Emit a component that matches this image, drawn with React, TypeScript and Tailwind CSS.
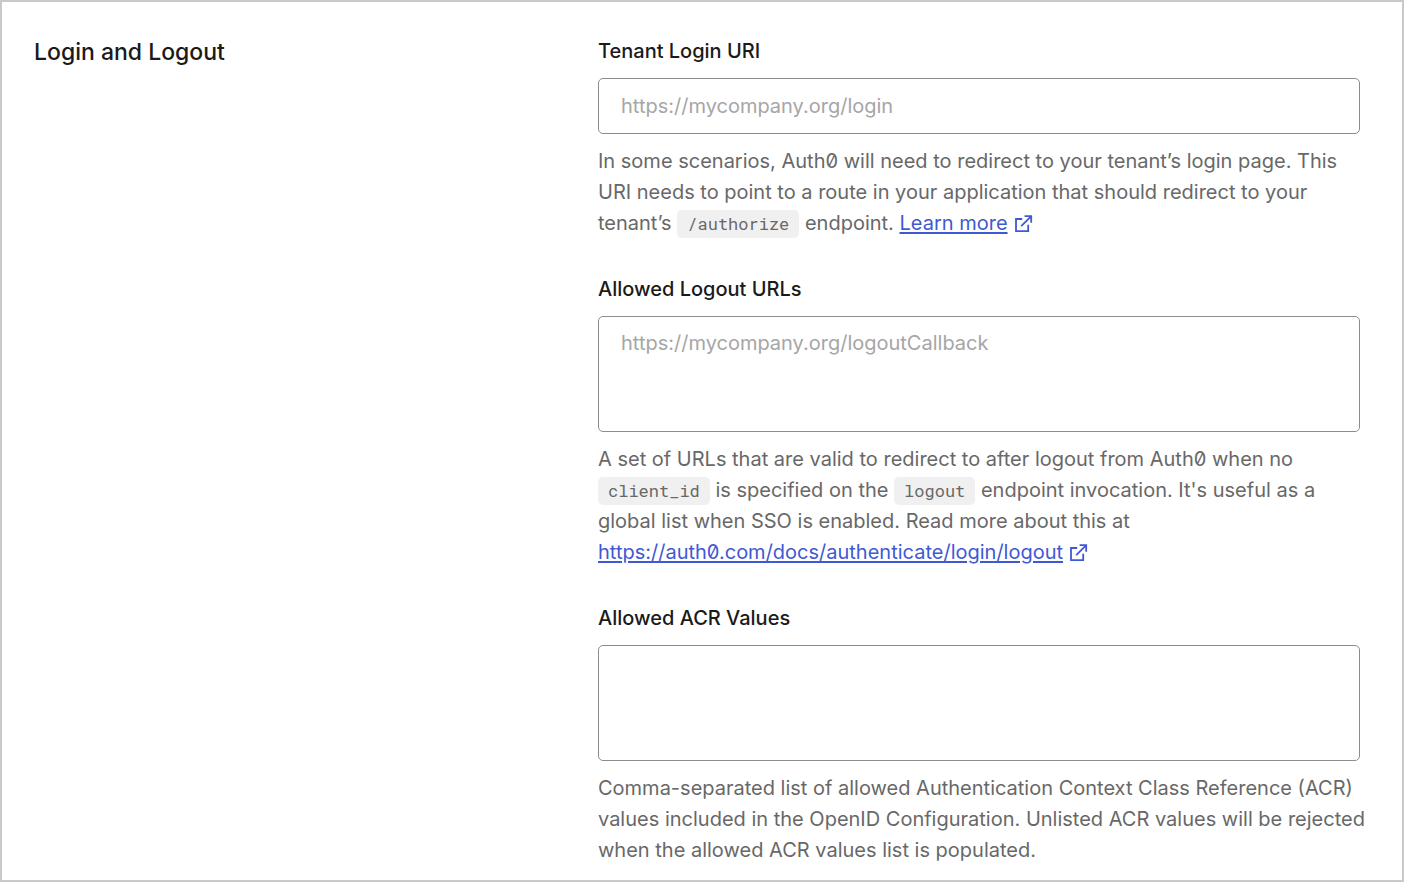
import type { ReactNode } from 'react'

function ExternalIcon() {
  return (
    <svg
      className="ml-[5px] inline-block size-5 align-[-4px]"
      viewBox="0 0 20 20"
      fill="none"
      stroke="currentColor"
      strokeWidth="1.8"
      aria-hidden="true"
    >
      <path d="M9.2 5H3v12.2h12.2v-6.4" />
      <path d="M11.6 2.1h6.6v6.6M18 2.3 8.2 12.1" />
    </svg>
  )
}

function Code({ children }: { children: ReactNode }) {
  return (
    <code className="inline-block rounded-[5px] bg-[#f0f0f0] px-[10px] py-1 font-['Roboto_Mono','Liberation_Mono',monospace] text-[17px] leading-5 text-[#686868]">
      {children}
    </code>
  )
}

function DocLink({ href, children }: { href: string; children: ReactNode }) {
  return (
    <a href={href} target="_blank" rel="noopener noreferrer" className="whitespace-nowrap text-[#3f59d4]">
      <span className="underline underline-offset-2">{children}</span>
      <ExternalIcon />
    </a>
  )
}

interface FieldProps {
  id: string
  label: string
  placeholder?: string
  multiline?: boolean
  children: ReactNode
}

const CONTROL =
  'block w-full rounded-[5px] border border-[#8c8c8c] bg-white px-[22px] text-xl text-[#1a1a1a] outline-none placeholder:text-[#a6a6a6]'

function Field({ id, label, placeholder, multiline, children }: FieldProps) {
  return (
    <div>
      <label htmlFor={id} className="mb-3 block text-xl leading-[30px] font-medium">
        {label}
      </label>
      {multiline ? (
        <textarea id={id} placeholder={placeholder} className={`${CONTROL} h-[116px] resize-none py-[11px] leading-[31px]`} />
      ) : (
        <input id={id} type="text" placeholder={placeholder} className={`${CONTROL} h-14`} />
      )}
      <p className="mt-3 -mr-2 text-xl leading-[31px] text-[#686868]">{children}</p>
    </div>
  )
}

export default function App() {
  return (
    <main className="grid min-h-screen grid-cols-[564px_1fr] border-2 border-[#c9c9c9] bg-white pt-[34px] pr-[42px] pb-3 pl-8 font-['Inter','Liberation_Sans',sans-serif] text-[#1a1a1a] slashed-zero">
      <h2 className="text-[23px] leading-8 font-medium">Login and Logout</h2>

      <form className="space-y-[35px]">
        <Field id="login-uri" label="Tenant Login URI" placeholder="https://mycompany.org/login">
          In some scenarios, Auth0 will need to redirect to your tenant’s login page. This URI needs to point to a
          route in your application that should redirect to your tenant’s <Code>/authorize</Code> endpoint.{' '}
          <DocLink href="#learn-more">Learn more</DocLink>
        </Field>

        <Field
          id="logout-urls"
          label="Allowed Logout URLs"
          placeholder="https://mycompany.org/logoutCallback"
          multiline
        >
          A set of URLs that are valid to redirect to after logout from Auth0 when no <Code>client_id</Code> is
          specified on the <Code>logout</Code> endpoint invocation. It's useful as a global list when SSO is enabled.
          Read more about this at{' '}
          <DocLink href="https://auth0.com/docs/authenticate/login/logout">
            https://auth0.com/docs/authenticate/login/logout
          </DocLink>
        </Field>

        <Field id="acr-values" label="Allowed ACR Values" multiline>
          Comma-separated list of allowed Authentication Context Class Reference (ACR) values included in the OpenID
          Configuration. Unlisted ACR values will be rejected when the allowed ACR values list is populated.
        </Field>
      </form>
    </main>
  )
}
